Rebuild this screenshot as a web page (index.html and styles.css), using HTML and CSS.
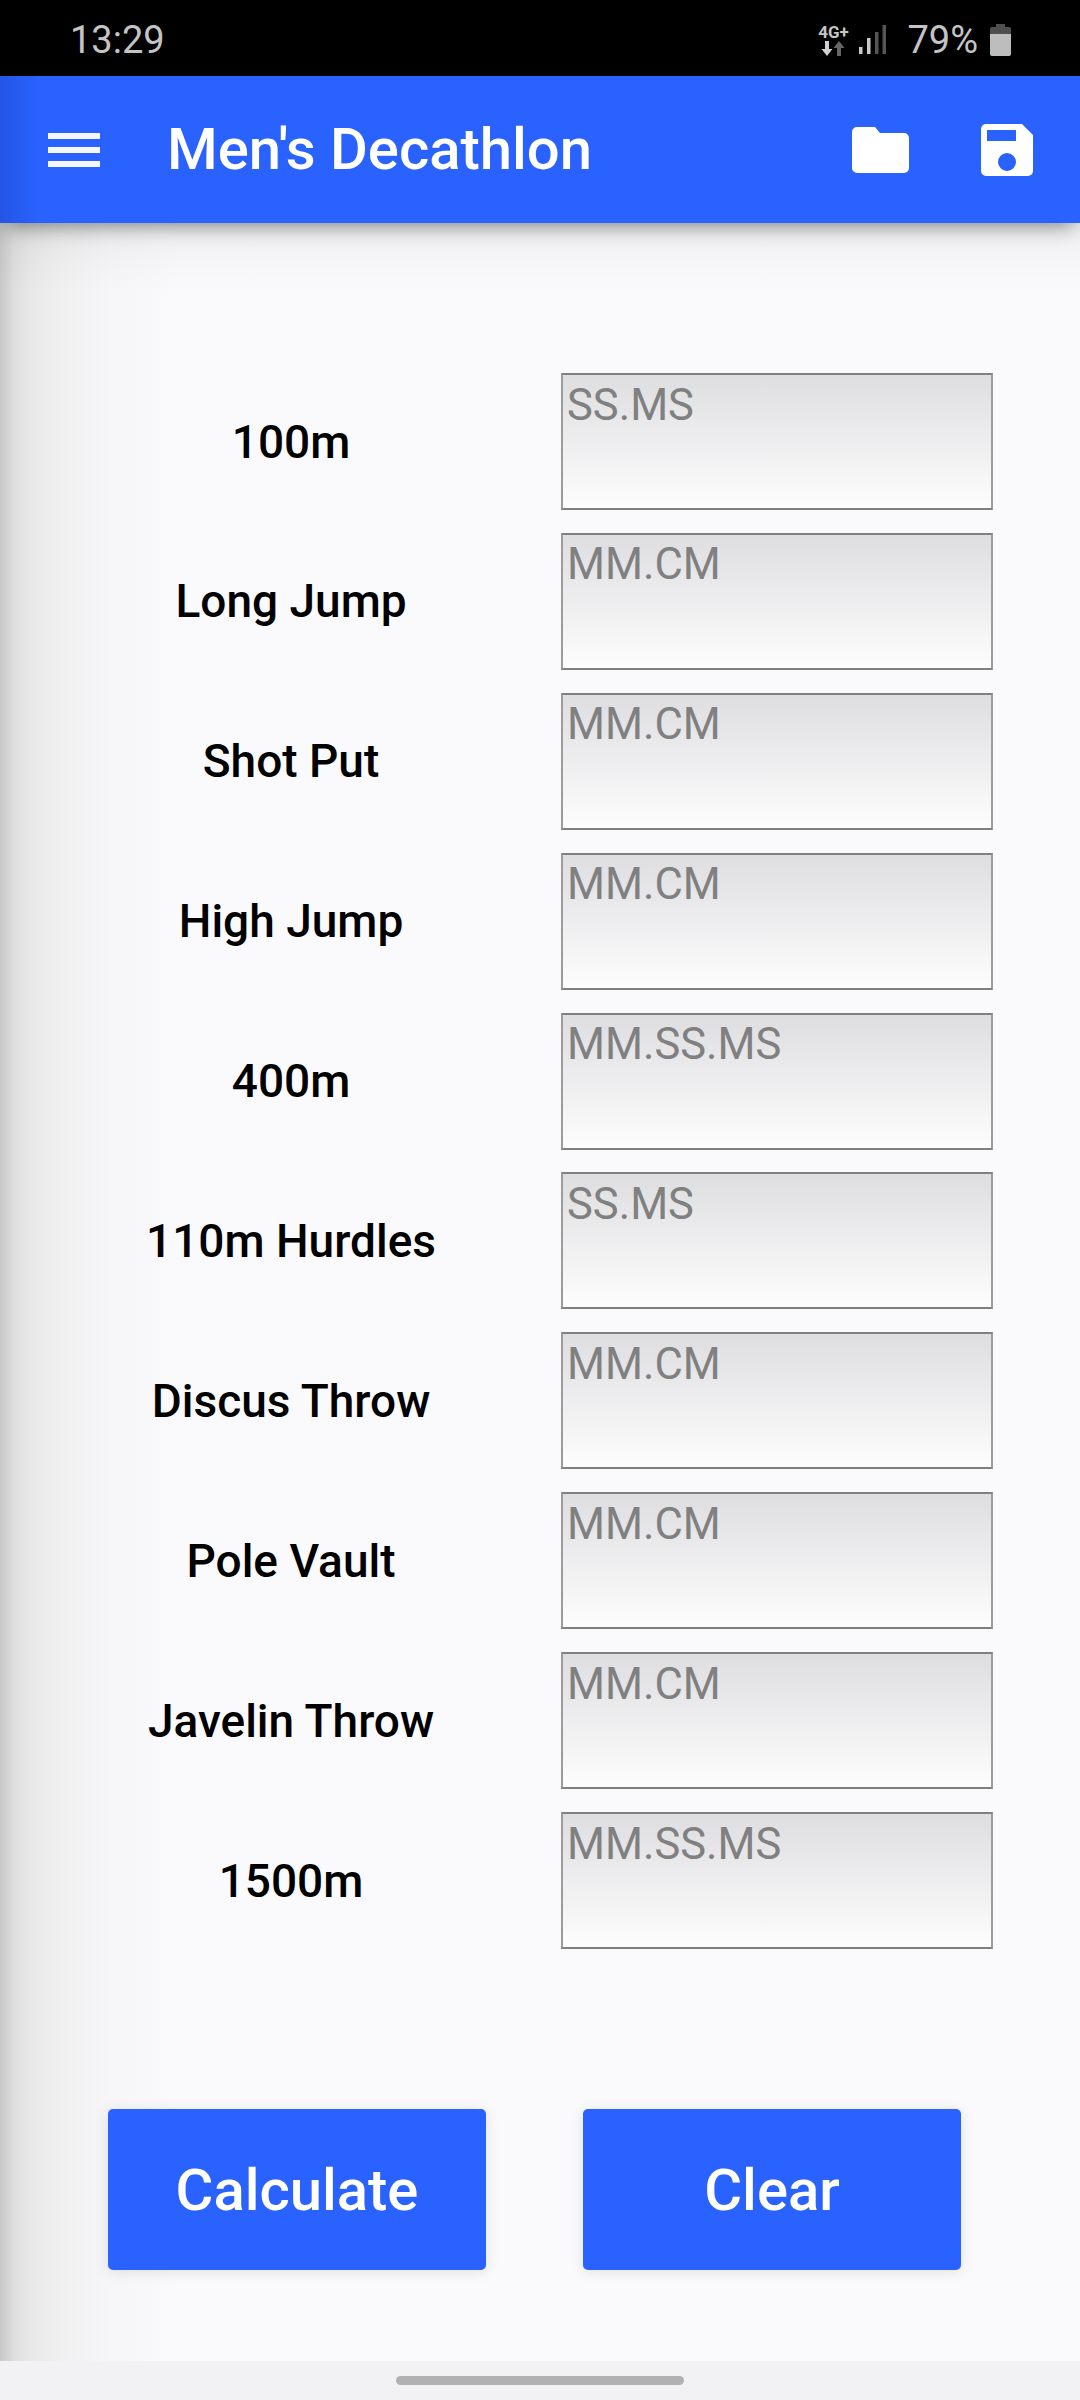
FILE: index.html
```html
<!DOCTYPE html>
<html lang="en">
<head>
  <meta charset="UTF-8">
  <meta name="viewport" content="width=device-width, initial-scale=1.0">
  <title>Men's Decathlon</title>
  <link rel="stylesheet" href="styles.css">
</head>
<body>

  <div class="status-bar">
    <span class="status-time">13:29</span>
    <div class="status-right">
      <div class="network">
        <span class="network-label">4G+</span>
        <svg class="network-arrows" width="24" height="15" viewBox="0 0 24 15">
          <path fill="#cfcfcf" d="M4 0h4v8h3.500l-5.500 7L.5 8H4z"/>
          <path fill="#666" d="M16 15h4V7h3.500L18 0l-5.500 7H16z"/>
        </svg>
      </div>
      <svg class="signal" width="27" height="29" viewBox="0 0 27 29">
        <rect x="0" y="22" width="3.500" height="7" fill="#c8c8c8"/>
        <rect x="8" y="13" width="3.500" height="16" fill="#c8c8c8"/>
        <rect x="16" y="7" width="3.500" height="22" fill="#555"/>
        <rect x="23.500" y="0" width="3.500" height="29" fill="#555"/>
      </svg>
      <span class="status-battery-text">79%</span>
      <svg class="battery" width="21" height="32" viewBox="0 0 21 32">
        <path fill="#4f4f4f" d="M6 0h9v3h4a2 2 0 0 1 2 2v6H0V5a2 2 0 0 1 2-2h4z"/>
        <path fill="#bdbdbd" d="M0 10h21v20a2 2 0 0 1-2 2H2a2 2 0 0 1-2-2z"/>
      </svg>
    </div>
  </div>

  <header class="app-bar">
    <svg class="menu-icon" width="52" height="34" viewBox="0 0 52 34">
      <rect y="0" width="52" height="6" fill="#f6f7fe"/>
      <rect y="14" width="52" height="6" fill="#f6f7fe"/>
      <rect y="28" width="52" height="6" fill="#f6f7fe"/>
    </svg>
    <h1 class="app-title">Men's Decathlon</h1>
    <svg class="folder-icon" width="57" height="46" viewBox="0 0 57 46">
      <path fill="#fff" d="M5 0h18l5 6h24a5 5 0 0 1 5 5v30a5 5 0 0 1-5 5H5a5 5 0 0 1-5-5V5a5 5 0 0 1 5-5z"/>
    </svg>
    <svg class="save-icon" width="52" height="52" viewBox="0 0 52 52">
      <path fill="#fff" fill-rule="evenodd" d="M5 0h36l11 11v36a5 5 0 0 1-5 5H5a5 5 0 0 1-5-5V5a5 5 0 0 1 5-5zM6 6v11h29V6zM26 29a9 9 0 1 0 0 18 9 9 0 0 0 0-18z"/>
    </svg>
  </header>

  <main class="content">
    <form class="event-form">
      <div class="event-row">
        <label class="event-label" for="e1">100m</label>
        <input class="event-input" id="e1" type="text" placeholder="SS.MS">
      </div>
      <div class="event-row">
        <label class="event-label" for="e2">Long Jump</label>
        <input class="event-input" id="e2" type="text" placeholder="MM.CM">
      </div>
      <div class="event-row">
        <label class="event-label" for="e3">Shot Put</label>
        <input class="event-input" id="e3" type="text" placeholder="MM.CM">
      </div>
      <div class="event-row">
        <label class="event-label" for="e4">High Jump</label>
        <input class="event-input" id="e4" type="text" placeholder="MM.CM">
      </div>
      <div class="event-row">
        <label class="event-label" for="e5">400m</label>
        <input class="event-input" id="e5" type="text" placeholder="MM.SS.MS">
      </div>
      <div class="event-row">
        <label class="event-label" for="e6">110m Hurdles</label>
        <input class="event-input" id="e6" type="text" placeholder="SS.MS">
      </div>
      <div class="event-row">
        <label class="event-label" for="e7">Discus Throw</label>
        <input class="event-input" id="e7" type="text" placeholder="MM.CM">
      </div>
      <div class="event-row">
        <label class="event-label" for="e8">Pole Vault</label>
        <input class="event-input" id="e8" type="text" placeholder="MM.CM">
      </div>
      <div class="event-row">
        <label class="event-label" for="e9">Javelin Throw</label>
        <input class="event-input" id="e9" type="text" placeholder="MM.CM">
      </div>
      <div class="event-row">
        <label class="event-label" for="e10">1500m</label>
        <input class="event-input" id="e10" type="text" placeholder="MM.SS.MS">
      </div>
    </form>

    <div class="actions">
      <button class="action-button" type="button">Calculate</button>
      <button class="action-button" type="button">Clear</button>
    </div>
  </main>

  <div class="nav-bar">
    <div class="nav-pill"></div>
  </div>

</body>
</html>
```

FILE: styles.css
```css
body {
  font-family: Roboto, Arial, sans-serif;
  margin: 0;
  padding: 0;
  width: 1080px;
  height: 2400px;
  display: flex;
  flex-direction: column;
  overflow: hidden;
  background-color: #fafafc;
}

.status-bar {
  height: 76px;
  flex: none;
  box-sizing: border-box;
  background-color: #000;
  color: #c4c4c4;
  display: flex;
  align-items: center;
  justify-content: space-between;
  padding: 3px 69px 0 70px;
  font-size: 38px;
}

.status-right {
  display: flex;
  align-items: center;
}

.network {
  display: flex;
  flex-direction: column;
  align-items: center;
  width: 32px;
  margin-right: 10px;
}

.network-label {
  font-size: 17px;
  font-weight: 700;
  line-height: 17px;
}

.signal {
  margin-right: 21px;
}

.status-battery-text {
  margin-right: 12px;
}

.app-bar {
  height: 147px;
  flex: none;
  box-sizing: border-box;
  position: relative;
  z-index: 1;
  background-color: #2962ff;
  background-image: linear-gradient(to right, rgba(0, 0, 40, 0.12), rgba(0, 0, 40, 0) 40px);
  color: #fff;
  display: flex;
  align-items: center;
  padding: 0 47px 0 48px;
  box-shadow: 0 8px 20px -6px rgba(0, 0, 0, 0.5);
}

.app-title {
  flex: 1;
  margin: 0 0 2px 67px;
  font-size: 58px;
  font-weight: 500;
}

.folder-icon {
  margin-right: 72px;
}

.content {
  flex: 1;
  display: flex;
  flex-direction: column;
  background-image:
    linear-gradient(to bottom, rgba(0, 0, 0, 0.04), rgba(0, 0, 0, 0) 70px),
    linear-gradient(to right, #c8c8c8, #dedede 14px, #e8e8e9 30px, #f0f0f1 60px, #f6f6f8 110px, #fafafc 180px);
}

.event-form {
  display: flex;
  flex-direction: column;
  gap: 22.900px;
  padding-top: 150px;
}

.event-row {
  display: grid;
  grid-template-columns: 561px 432px;
  align-items: center;
}

.event-label {
  padding-left: 21px;
  text-align: center;
  font-size: 46px;
  font-weight: 500;
  color: #000;
}

.event-input {
  box-sizing: border-box;
  width: 432px;
  height: 137px;
  margin: 0;
  padding: 0 0 73px 4px;
  border: 2px solid #9c9c9c;
  border-top-color: #808080;
  border-bottom-color: #808080;
  border-radius: 0;
  background: linear-gradient(to bottom, #dedee0, #fdfdfe);
  font-family: Roboto, Arial, sans-serif;
  font-size: 43.500px;
  color: #808080;
}

.event-input::placeholder {
  color: #808080;
  opacity: 1;
}

.actions {
  display: flex;
  gap: 97px;
  padding: 160px 0 0 108px;
}

.action-button {
  width: 378px;
  height: 161px;
  padding: 0;
  background-color: #2962ff;
  color: #fff;
  border: none;
  border-radius: 5px;
  font-family: Roboto, Arial, sans-serif;
  font-size: 58px;
  font-weight: 500;
  cursor: pointer;
  box-shadow: 0 2px 14px rgba(0, 0, 0, 0.1);
}

.nav-bar {
  height: 39px;
  flex: none;
  background-color: #f2f2f4;
  display: flex;
  justify-content: center;
  padding-top: 15px;
  box-sizing: border-box;
}

.nav-pill {
  width: 288px;
  height: 9px;
  border-radius: 5px;
  background-color: #b1b0b3;
}
```
